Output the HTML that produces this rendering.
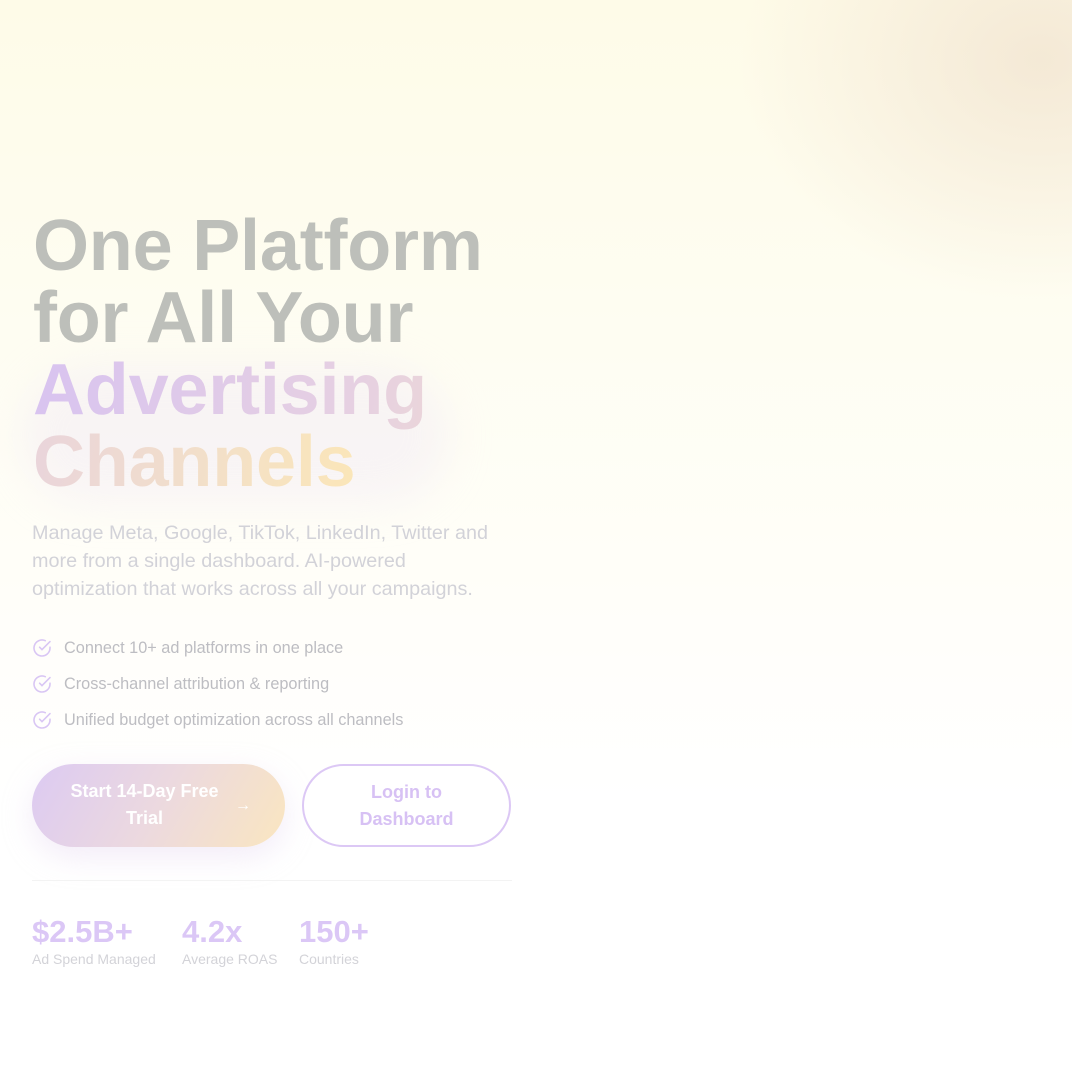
<!DOCTYPE html>
<html><head><meta charset="utf-8"><style>
*{margin:0;padding:0;box-sizing:border-box}
html,body{width:1072px;height:1072px;overflow:hidden}
body{font-family:"Liberation Sans",sans-serif;position:relative;
background:
radial-gradient(ellipse 300px 240px at 1040px 60px,rgba(240,225,205,.7),rgba(245,235,215,0) 100%),
linear-gradient(180deg,#fefbe8 0px,#fefdf1 300px,#fffef9 600px,#fff 800px);}
.h{position:absolute;left:33px;top:210px;font-size:72px;font-weight:bold;line-height:72px;letter-spacing:-0.2px}
.g{color:#bdbfba}
.grad{background:linear-gradient(100deg,#d8c3f0 0%,#e6d0e2 45%,#f3e0c8 80%,#fbe6b8 100%);-webkit-background-clip:text;background-clip:text;color:transparent}
.glow{position:absolute;left:20px;top:365px;width:430px;height:140px;border-radius:70px;background:rgba(235,225,245,.3);filter:blur(20px)}
.p{position:absolute;left:32px;top:519px;width:475px;font-size:19.8px;line-height:28px;color:#d2d2d8}
.li{position:absolute;left:32px;font-size:16.3px;color:#bdbdc2;display:flex;align-items:center}
.li svg{margin-right:12px}
.b1{position:absolute;left:32px;top:764px;width:253px;height:83px;border-radius:42px;background:linear-gradient(120deg,#dccaf2,#ecd9df 50%,#fae6c0);color:#fff;font-weight:bold;font-size:18px;line-height:27px;text-align:center;padding-top:14px;padding-right:28px;box-shadow:0 10px 30px rgba(220,200,235,.35)}
.b1 span{position:absolute;right:34px;top:28px;font-weight:normal;font-size:16px}
.b2{position:absolute;left:302px;top:764px;width:209px;height:83px;border-radius:42px;border:2px solid #dcc8f5;color:#d7c1f4;font-weight:bold;font-size:18px;line-height:27px;text-align:center;padding-top:13px;background:#fff}
.hr{position:absolute;left:32px;top:880px;width:480px;height:1px;background:#f3f3f3}
.s{position:absolute;top:915px}
.s b{display:block;font-size:31px;color:#dbc7f6;line-height:34px}
.s i{display:block;font-style:normal;font-size:14px;color:#d3d3d8;margin-top:2px}
</style></head><body>
<div class="glow"></div>
<div class="h"><span class="g">One Platform<br>for All Your</span><br><span class="grad">Advertising<br>Channels</span></div>
<div class="p">Manage Meta, Google, TikTok, LinkedIn, Twitter and more from a single dashboard. AI-powered optimization that works across all your campaigns.</div>
<div class="li" style="top:638px"><svg width="20" height="20" viewBox="0 0 20 20" fill="none" stroke="#d9c6f4" stroke-width="1.6" stroke-linecap="round"><path d="M18 9.2V10a8 8 0 1 1-4.7-7.3"/><path d="M18 3.6 10 11.6 7.6 9.2"/></svg>Connect 10+ ad platforms in one place</div>
<div class="li" style="top:674px"><svg width="20" height="20" viewBox="0 0 20 20" fill="none" stroke="#d9c6f4" stroke-width="1.6" stroke-linecap="round"><path d="M18 9.2V10a8 8 0 1 1-4.7-7.3"/><path d="M18 3.6 10 11.6 7.6 9.2"/></svg>Cross-channel attribution &amp; reporting</div>
<div class="li" style="top:710px"><svg width="20" height="20" viewBox="0 0 20 20" fill="none" stroke="#d9c6f4" stroke-width="1.6" stroke-linecap="round"><path d="M18 9.2V10a8 8 0 1 1-4.7-7.3"/><path d="M18 3.6 10 11.6 7.6 9.2"/></svg>Unified budget optimization across all channels</div>
<div class="b1">Start 14-Day Free<br>Trial<span>→</span></div>
<div class="b2">Login to<br>Dashboard</div>
<div class="hr"></div>
<div class="s" style="left:32px"><b>$2.5B+</b><i>Ad Spend Managed</i></div>
<div class="s" style="left:182px"><b>4.2x</b><i>Average ROAS</i></div>
<div class="s" style="left:299px"><b>150+</b><i>Countries</i></div>
</body></html>
